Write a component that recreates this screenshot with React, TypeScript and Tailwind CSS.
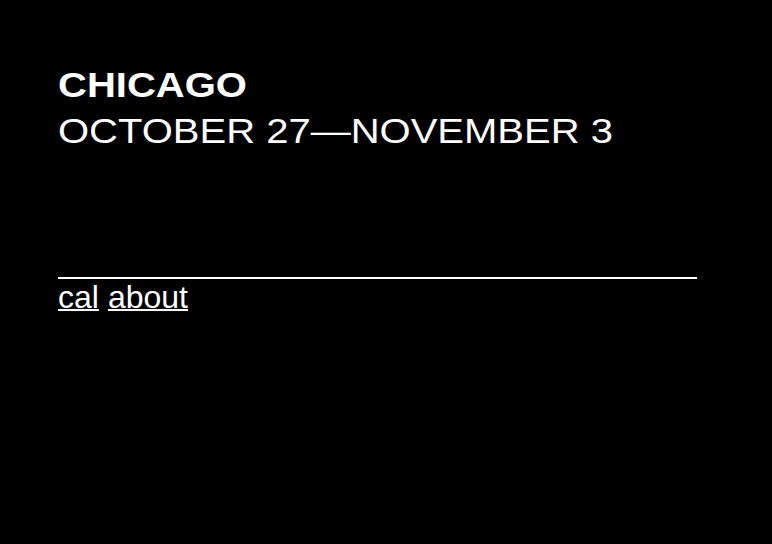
export default function App() {
  return (
    <div className="min-h-[544px] w-full bg-black text-white" style={{ fontFamily: '"Liberation Sans", Arial, sans-serif' }}>
      <div className="px-[58px] pt-[60px]">
        <h1 className="text-[40px] leading-[46px] font-bold origin-[0_37px] scale-y-[0.86]">CHICAGO</h1>
        <h2 className="text-[40px] leading-[46px] font-normal origin-[0_37px] scale-y-[0.86]">OCTOBER 27—NOVEMBER 3</h2>
        <div className="mt-[125px] h-[2px] w-[639px] bg-white" />
        <nav className="flex gap-[9px] text-[32px] leading-[36px]">
          <a href="#" className="underline decoration-2">cal</a>
          <a href="#" className="underline decoration-2">about</a>
        </nav>
      </div>
    </div>
  );
}
